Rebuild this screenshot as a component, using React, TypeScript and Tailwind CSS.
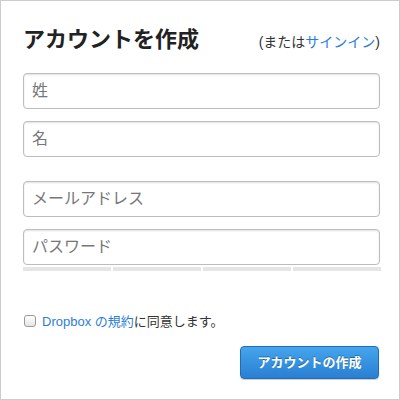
import React from "react";

const font = { fontFamily: '"Helvetica Neue", "Liberation Sans", "Noto Sans CJK JP", sans-serif' };

function Field({ ph, className = "" }: { ph: string; className?: string }) {
  return (
    <div
      className={`w-[357px] h-[36px] rounded-[4px] border border-[#bdbdbd] bg-white flex items-center pl-[8px] shadow-[inset_0_1px_2px_rgba(0,0,0,0.12)] ${className}`}
    >
      <span className="text-[16px] text-[#777] leading-none">{ph}</span>
    </div>
  );
}

export default function App() {
  return (
    <div className="w-[400px] h-[400px] border border-[#cccccc] bg-white pl-[22px] pt-[25px] flex flex-col" style={font}>
      <div className="w-[357px] flex items-baseline justify-between h-[28px]">
        <span className="text-[22px] font-bold text-[#222] leading-[28px]">アカウントを作成</span>
        <span className="text-[14px] text-[#333] leading-[28px]">
          (または<span className="text-[#2d7ed6]">サインイン</span>)
        </span>
      </div>
      <Field ph="姓" className="mt-[19px]" />
      <Field ph="名" className="mt-[12px]" />
      <Field ph="メールアドレス" className="mt-[24px]" />
      <Field ph="パスワード" className="mt-[12px]" />
      <div className="w-[358px] flex gap-[2px] mt-[2px]">
        <div className="flex-1 h-[4px] bg-[#e5e5e5]" />
        <div className="flex-1 h-[4px] bg-[#e5e5e5]" />
        <div className="flex-1 h-[4px] bg-[#e5e5e5]" />
        <div className="flex-1 h-[4px] bg-[#e5e5e5]" />
      </div>
      <div className="flex items-center mt-[43px] h-[14px]">
        <div className="w-[12px] h-[12px] rounded-[3px] border border-[#999] bg-gradient-to-b from-white to-[#e6e6e6] ml-[1px]" />
        <span className="ml-[6px] text-[13px] text-[#333] leading-none">
          <span className="text-[#2d7ed6]">Dropbox の規約</span>に同意します。
        </span>
      </div>
      <div className="w-[356px] flex justify-end mt-[18px]">
        <div className="w-[139px] h-[33px] rounded-[4px] border border-[#1f6db8] bg-gradient-to-b from-[#45a5ec] to-[#2a7fd3] flex items-center justify-center shadow-[0_1px_1px_rgba(0,0,0,0.2)]">
          <span className="text-[13px] font-bold text-white leading-none [text-shadow:0_-1px_0_rgba(0,0,0,0.35)]">アカウントの作成</span>
        </div>
      </div>
    </div>
  );
}
